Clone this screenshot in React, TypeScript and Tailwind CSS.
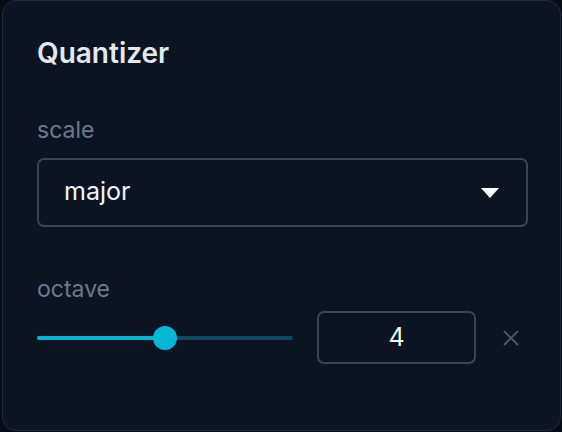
import { useState } from "react";

function App() {
  const [scale] = useState("major");
  const [octave] = useState(4);
  const pct = 50;

  return (
    <div
      className="w-[562px] h-[432px] bg-[#070b13] pl-[2px]"
      style={{ fontFamily: "Inter, 'Noto Sans', sans-serif" }}
    >
      <div className="w-[559px] h-[431px] rounded-[14px] border border-[#1e2a3b] bg-[#0c1421] px-[34px] pt-[35px] flex flex-col">
        <h1 className="text-[28px] leading-[34px] font-semibold text-[#e2e8f0]">Quantizer</h1>

        <label className="mt-[45px] text-[23px] leading-[30px] text-[#6b7a8d]">scale</label>
        <div className="mt-[13px] h-[69px] w-[491px] rounded-[7px] border-2 border-[#3a4556] flex items-center justify-between pl-[25px] pr-[27px]">
          <span className="text-[25px] leading-[30px] text-[#f1f5f9] -mt-[4px]">{scale}</span>
          <svg width="18" height="10" viewBox="0 0 18 10">
            <path d="M0 0 L18 0 L9 10 Z" fill="#f8fafc" />
          </svg>
        </div>

        <label className="mt-[47px] text-[23px] leading-[30px] text-[#6b7a8d]">octave</label>
        <div className="mt-[7px] flex items-center">
          <div className="relative w-[256px] h-[24px] flex items-center">
            <div className="w-full h-[4px] rounded-full bg-[#0e4a5e]">
              <div className="h-full rounded-full bg-[#06b6d4]" style={{ width: `${pct}%` }} />
            </div>
            <div
              className="absolute top-0 w-[24px] h-[24px] rounded-full bg-[#06b6d4]"
              style={{ left: `calc(${pct}% - 12px)` }}
            />
          </div>
          <div className="ml-[24px] w-[159px] h-[53px] rounded-[7px] border-2 border-[#3a4556] flex items-center justify-center text-[25px] text-[#f1f5f9]">
            {octave}
          </div>
          <svg className="ml-[27px]" width="16" height="16" viewBox="0 0 16 16">
            <path d="M1 1 L15 15 M15 1 L1 15" stroke="#475569" strokeWidth="2" />
          </svg>
        </div>
      </div>
    </div>
  );
}

export default App;
